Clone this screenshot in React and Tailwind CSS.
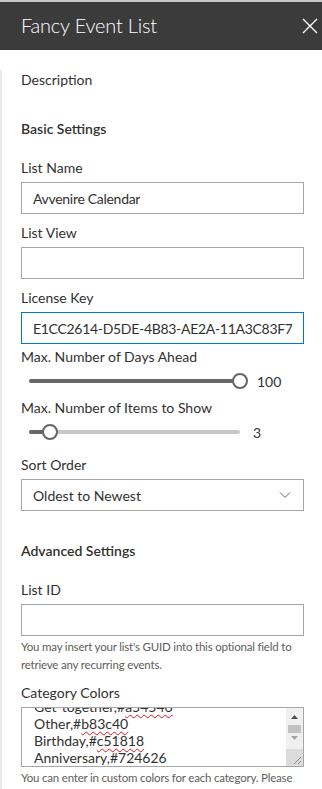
import React from "react";

const font = { fontFamily: 'Lato, "Open Sans", sans-serif' };

function Label({ children, className = "" }) {
    return <div className={`h-5 text-[14px] leading-5 text-[#323130] ${className}`}>{children}</div>;
}

function TextBox({ value = "", focused = false }) {
    return (
        <div
            className={`h-8 border ${focused ? "border-[#0078d4]" : "border-[#a6a6a6]"} pl-[11px] pr-[11px] flex items-center`}
        >
            <div className="overflow-hidden whitespace-nowrap text-[14px] tracking-[-0.3px] text-[#323130]">{value}</div>
        </div>
    );
}

function Slider({ pct, value, valueGap }) {
    return (
        <div className="h-7 flex items-center pl-[8px]">
            <div className="relative w-[211px] h-1 rounded-full bg-[#c8c8c8]">
                <div className="h-1 rounded-full bg-[#666666]" style={{ width: `${pct}%` }} />
                <div
                    className="absolute top-1/2 w-4 h-4 -mt-2 -ml-2 rounded-full border-2 border-[#666666] bg-white"
                    style={{ left: `${pct}%` }}
                />
            </div>
            <span className="text-[14px] text-[#323130]" style={{ marginLeft: valueGap }}>
                {value}
            </span>
        </div>
    );
}

function Squiggle({ children }) {
    return <span className="underline decoration-wavy decoration-[#e81123] decoration-1 underline-offset-2">{children}</span>;
}

export default function App() {
    return (
        <div className="w-[322px] h-[789px] overflow-hidden bg-white" style={font}>
            {/* header */}
            <div className="border-t-2 border-[#c8c8c8] h-[50px] bg-[#3b3b3b] flex items-center justify-between pl-[21px] pr-[4px]">
                <span className="text-[20px] tracking-[-0.2px] font-light text-white leading-none -mt-[2px]">Fancy Event List</span>
                <svg width="16" height="16" viewBox="0 0 16 16" className="-mt-[1px]">
                    <path d="M1 1 L15 15 M15 1 L1 15" stroke="white" strokeWidth="1.4" fill="none" />
                </svg>
            </div>

            <div className="border-l-2 border-[#eaeaea] h-[739px] pl-[19px] pr-[18px]">
                <Label className="mt-[20px]">Description</Label>
                <Label className="mt-[29px] font-semibold">Basic Settings</Label>

                <Label className="mt-[19px] mb-1">List Name</Label>
                <TextBox value="Avvenire Calendar" />

                <Label className="mt-[9px] mb-1">List View</Label>
                <TextBox />

                <Label className="mt-[9px] mb-1">License Key</Label>
                <TextBox value="E1CC2614-D5DE-4B83-AE2A-11A3C83F7E94" focused />

                <Label className="mt-[3px]">Max. Number of Days Ahead</Label>
                <Slider pct={100} value="100" valueGap="17px" />

                <Label className="mt-[3px]">Max. Number of Items to Show</Label>
                <Slider pct={10} value="3" valueGap="13px" />

                <Label className="mt-[9px] mb-1">Sort Order</Label>
                <div className="h-8 border border-[#a6a6a6] pl-[11px] pr-[12px] flex items-center justify-between">
                    <span className="text-[14px] text-[#323130]">Oldest to Newest</span>
                    <svg width="12" height="8" viewBox="0 0 12 8">
                        <path d="M1 1.5 L6 6.5 L11 1.5" stroke="#666666" strokeWidth="1" fill="none" />
                    </svg>
                </div>

                <Label className="mt-[30px] font-semibold">Advanced Settings</Label>

                <Label className="mt-[19px] mb-1">List ID</Label>
                <TextBox />
                <p className="mt-[2px] text-[11.5px] tracking-[-0.2px] leading-[18px] text-[#605e5c]">
                    You may insert your list's GUID into this optional field to retrieve any recurring events.
                </p>

                <Label className="mt-[9px] mb-1">Category Colors</Label>
                <div className="h-[60px] border border-[#a6a6a6] flex overflow-hidden">
                    <div className="flex-1 overflow-hidden pl-[12px] text-[14px] leading-[17px] text-[#323130]">
                        <div className="-mt-[10px]">
                            <div>Get-together,#<Squiggle>a54546</Squiggle></div>
                            <div>Other,#<Squiggle>b83c40</Squiggle></div>
                            <div>Birthday,#<Squiggle>c51818</Squiggle></div>
                            <div>Anniversary,#724626</div>
                        </div>
                    </div>
                    <div className="w-[17px] bg-[#f0f0f0] flex flex-col items-center">
                        <svg width="17" height="15" viewBox="0 0 17 15" className="mt-[1px]">
                            <path d="M5 10 L8.5 6 L12 10 Z" fill="#505050" />
                        </svg>
                        <div className="w-[13px] h-[8px] bg-[#c1c1c1] mt-[1px]" />
                        <svg width="17" height="12" viewBox="0 0 17 12">
                            <path d="M5 3 L8.5 7 L12 3 Z" fill="#a3a3a3" />
                        </svg>
                        <div className="flex-1" />
                        <div className="w-[17px] h-[17px] bg-[#dcdcdc] flex items-end justify-end">
                            <svg width="17" height="17" viewBox="0 0 17 17">
                                <path d="M15 8 L8 15 M15 12 L12 15" stroke="#8a8a8a" strokeWidth="1" fill="none" />
                            </svg>
                        </div>
                    </div>
                </div>
                <p className="mt-[2px] text-[11.5px] tracking-[-0.2px] leading-[18px] text-[#605e5c] whitespace-nowrap">
                    You can enter in custom colors for each category. Please
                </p>
            </div>
        </div>
    );
}
